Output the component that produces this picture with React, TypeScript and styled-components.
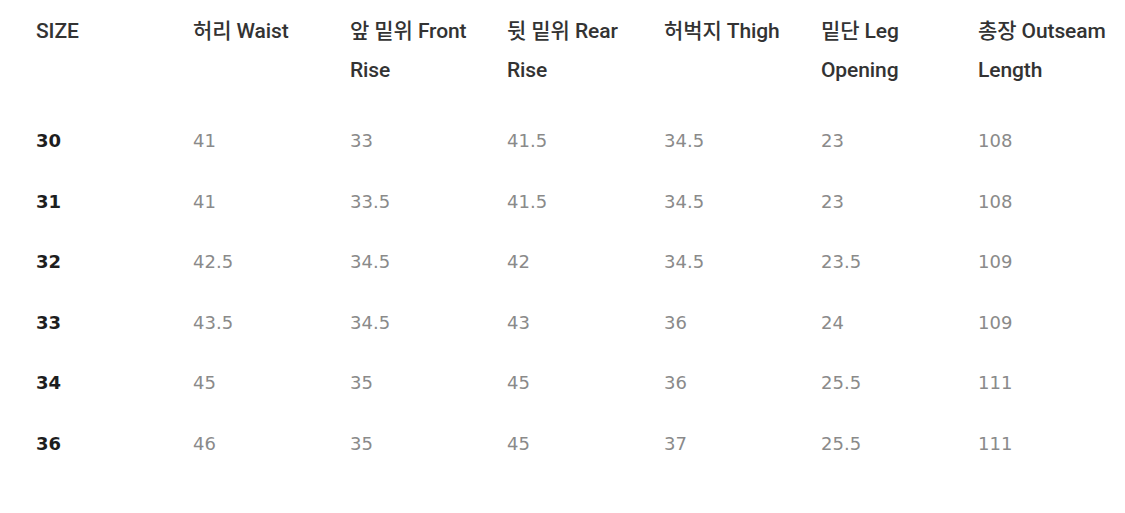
import React from "react";
import styled, { createGlobalStyle } from "styled-components";

const Global = createGlobalStyle`
  html, body { margin: 0; padding: 0; background: #ffffff; }
  body { font-family: Roboto, "Noto Sans CJK KR", sans-serif; }
`;

const Page = styled.div`
  width: 1125px;
  height: 513px;
  overflow: hidden;
  padding: 12px 0 0 36px;
  box-sizing: border-box;
`;

const Table = styled.div`
  display: grid;
  grid-template-columns: repeat(6, 157px) 140px;
`;

const HeadCell = styled.div`
  font-family: Roboto, "Noto Sans CJK KR", sans-serif;
  font-size: 21px;
  font-weight: 500;
  line-height: 39px;
  color: #333333;
  letter-spacing: -0.1px;
  height: 99px;
  white-space: nowrap;
`;

const Cell = styled.div<{ $label?: boolean }>`
  font-family: "DejaVu Sans", Verdana, sans-serif;
  font-size: 18px;
  line-height: 60.5px;
  height: 60.5px;
  color: ${(p) => (p.$label ? "#1e1e1e" : "#8a8a8a")};
  font-weight: ${(p) => (p.$label ? 700 : 400)};
`;

const headers: [string, string?][] = [
  ["SIZE"],
  ["허리 Waist"],
  ["앞 밑위 Front", "Rise"],
  ["뒷 밑위 Rear", "Rise"],
  ["허벅지 Thigh"],
  ["밑단 Leg", "Opening"],
  ["총장 Outseam", "Length"],
];

const rows: string[][] = [
  ["30", "41", "33", "41.5", "34.5", "23", "108"],
  ["31", "41", "33.5", "41.5", "34.5", "23", "108"],
  ["32", "42.5", "34.5", "42", "34.5", "23.5", "109"],
  ["33", "43.5", "34.5", "43", "36", "24", "109"],
  ["34", "45", "35", "45", "36", "25.5", "111"],
  ["36", "46", "35", "45", "37", "25.5", "111"],
];

export default function App() {
  return (
    <Page>
      <Global />
      <Table>
        {headers.map(([a, b], i) => (
          <HeadCell key={i}>
            {a}
            {b && (
              <>
                <br />
                {b}
              </>
            )}
          </HeadCell>
        ))}
        {rows.map((r, ri) =>
          r.map((v, ci) => (
            <Cell key={`${ri}-${ci}`} $label={ci === 0}>
              {v}
            </Cell>
          ))
        )}
      </Table>
    </Page>
  );
}
